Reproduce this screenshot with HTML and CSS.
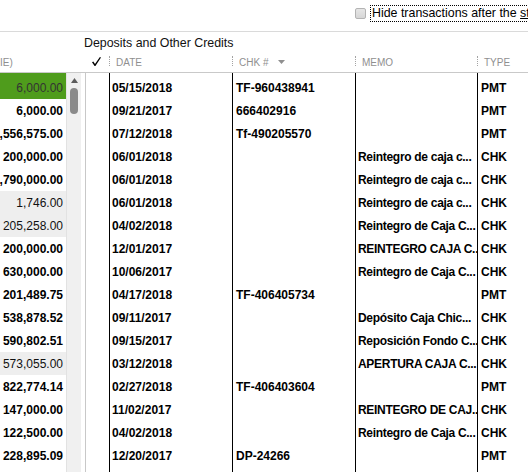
FILE: index.html
```html
<!DOCTYPE html>
<html>
<head>
<meta charset="utf-8">
<link rel="stylesheet" href="styles.css">
</head>
<body>
<div class="page">
  <div class="topbar">
    <span class="cb"></span>
    <span class="cb-label">Hide transactions after the <u>st</u>atement's end date</span>
  </div>
  <div class="head">
    <div class="title-row">Deposits and Other Credits</div>
    <div class="labels">
      <div class="h h-amt">IE)</div>
      <div class="h h-sb"></div>
      <div class="h h-chk"><svg class="check" width="9" height="9" viewBox="0 0 9 9"><polygon points="0,5.2 1.3,4.6 3,6.9 7.9,0 9,0.6 3.4,9 2.6,9" fill="#000"/></svg></div>
      <div class="h h-col w-date"><i class="sep"></i>DATE</div>
      <div class="h h-col w-no"><i class="sep"></i>CHK #<svg class="tri" width="7" height="4" viewBox="0 0 7 4"><polygon points="0,0 7,0 3.5,4" fill="#8f8f8f"/></svg></div>
      <div class="h h-col w-memo"><i class="sep"></i>MEMO</div>
      <div class="h h-col w-type"><i class="sep"></i>TYPE</div>
    </div>
  </div>
  <div class="body">
    <div class="amounts">
      <div class="amt sel"><span>6,000.00</span></div>
      <div class="amt"><span>6,000.00</span></div>
      <div class="amt"><span>1,556,575.00</span></div>
      <div class="amt"><span>200,000.00</span></div>
      <div class="amt"><span>1,790,000.00</span></div>
      <div class="amt alt"><span>1,746.00</span></div>
      <div class="amt alt"><span>205,258.00</span></div>
      <div class="amt"><span>200,000.00</span></div>
      <div class="amt"><span>630,000.00</span></div>
      <div class="amt"><span>201,489.75</span></div>
      <div class="amt"><span>538,878.52</span></div>
      <div class="amt"><span>590,802.51</span></div>
      <div class="amt alt"><span>573,055.00</span></div>
      <div class="amt"><span>822,774.14</span></div>
      <div class="amt"><span>147,000.00</span></div>
      <div class="amt"><span>122,500.00</span></div>
      <div class="amt"><span>228,895.09</span></div>
    </div>
    <div class="scroll">
      <svg class="arrow" width="7" height="5" viewBox="0 0 7 5"><polygon points="3.5,0 7,5 0,5" fill="#5c5c5c"/></svg>
      <span class="thumb"></span>
    </div>
    <div class="grid">
      <div class="col c-chk"></div>
      <div class="col c-date">
        <div class="cell">05/15/2018</div>
        <div class="cell">09/21/2017</div>
        <div class="cell">07/12/2018</div>
        <div class="cell">06/01/2018</div>
        <div class="cell">06/01/2018</div>
        <div class="cell">06/01/2018</div>
        <div class="cell">04/02/2018</div>
        <div class="cell">12/01/2017</div>
        <div class="cell">10/06/2017</div>
        <div class="cell">04/17/2018</div>
        <div class="cell">09/11/2017</div>
        <div class="cell">09/15/2017</div>
        <div class="cell">03/12/2018</div>
        <div class="cell">02/27/2018</div>
        <div class="cell">11/02/2017</div>
        <div class="cell">04/02/2018</div>
        <div class="cell">12/20/2017</div>
      </div>
      <div class="col c-no">
        <div class="cell">TF-960438941</div>
        <div class="cell">666402916</div>
        <div class="cell">Tf-490205570</div>
        <div class="cell"></div>
        <div class="cell"></div>
        <div class="cell"></div>
        <div class="cell"></div>
        <div class="cell"></div>
        <div class="cell"></div>
        <div class="cell">TF-406405734</div>
        <div class="cell"></div>
        <div class="cell"></div>
        <div class="cell"></div>
        <div class="cell">TF-406403604</div>
        <div class="cell"></div>
        <div class="cell"></div>
        <div class="cell">DP-24266</div>
      </div>
      <div class="col c-memo">
        <div class="cell"></div>
        <div class="cell"></div>
        <div class="cell"></div>
        <div class="cell">Reintegro de caja c...</div>
        <div class="cell">Reintegro de caja c...</div>
        <div class="cell">Reintegro de caja c...</div>
        <div class="cell">Reintegro de Caja C...</div>
        <div class="cell">REINTEGRO CAJA C...</div>
        <div class="cell">Reintegro de Caja C...</div>
        <div class="cell"></div>
        <div class="cell">Depósito Caja Chic...</div>
        <div class="cell">Reposición Fondo C...</div>
        <div class="cell">APERTURA CAJA C...</div>
        <div class="cell"></div>
        <div class="cell">REINTEGRO DE CAJ...</div>
        <div class="cell">Reintegro de Caja C...</div>
        <div class="cell"></div>
      </div>
      <div class="col c-type">
        <div class="cell">PMT</div>
        <div class="cell">PMT</div>
        <div class="cell">PMT</div>
        <div class="cell">CHK</div>
        <div class="cell">CHK</div>
        <div class="cell">CHK</div>
        <div class="cell">CHK</div>
        <div class="cell">CHK</div>
        <div class="cell">CHK</div>
        <div class="cell">PMT</div>
        <div class="cell">CHK</div>
        <div class="cell">CHK</div>
        <div class="cell">CHK</div>
        <div class="cell">PMT</div>
        <div class="cell">CHK</div>
        <div class="cell">CHK</div>
        <div class="cell">PMT</div>
      </div>
    </div>
  </div>
</div>
</body>
</html>
```
FILE: styles.css
```css
html, body {
  margin: 0;
  padding: 0;
  background: #fff;
}
body {
  font-family: "Liberation Sans", Arial, sans-serif;
  color: #000;
}
.page {
  width: 528px;
  height: 472px;
  overflow: hidden;
}

/* top bar */
.topbar {
  height: 26px;
  padding: 5px 0 0 355px;
  border-bottom: 1px solid #dadada;
  display: flex;
  align-items: flex-start;
  white-space: nowrap;
  overflow: hidden;
  font-size: 12.4px;
}
.cb {
  flex: none;
  width: 11px;
  height: 11px;
  box-sizing: border-box;
  margin: 3px 4px 0 0;
  border: 1px solid #b3b3b3;
  border-radius: 2px;
  background: linear-gradient(#e6e6e6, #d6d6d6);
}
.cb-label {
  flex: none;
  line-height: 15px;
  padding-left: 1px;
  border: 1px dotted #000;
  border-right: none;
}

/* header */
.title-row {
  height: 18px;
  padding-top: 2px;
  line-height: 18px;
  padding-left: 84px;
  font-size: 12.4px;
  color: #111;
  white-space: nowrap;
}
.labels {
  display: flex;
  height: 20px;
  border-bottom: 1px solid #c9c9c9;
  font-size: 10px;
  color: #8f8f8f;
  white-space: nowrap;
}
.h {
  flex: none;
  display: flex;
  align-items: center;
  overflow: hidden;
}
.h-amt { width: 66px; }
.h-sb { width: 19px; }
.h-chk { width: 24px; }
.check { margin-left: 7px; margin-top: -1px; }
.w-date { width: 123px; }
.w-no { width: 123px; }
.w-memo { width: 122px; }
.w-type { flex: 1; }
.sep {
  flex: none;
  width: 0;
  height: 10px;
  margin-top: -2px;
  margin-right: 6px;
  border-left: 1px dotted #a3a3a3;
}
.tri { margin-left: 10px; margin-top: -1px; }

/* body */
.body {
  display: flex;
  height: 399px;
}
.amounts {
  flex: none;
  width: 66px;
  overflow: hidden;
}
.amt {
  display: flex;
  justify-content: flex-end;
  height: 22px;
  padding-top: 1px;
  line-height: 23px;
  padding-right: 3px;
  font-size: 12px;
  font-weight: bold;
  white-space: nowrap;
  overflow: hidden;
}
.amt span { flex: none; }
.amt.sel {
  padding-top: 4px;
  background: #4f9c1c;
  color: #333;
  font-weight: normal;
}
.amt.alt {
  background: #eeeeee;
  font-weight: normal;
  color: #111;
}
.scroll {
  flex: none;
  width: 15px;
  margin-right: 4px;
  background: #f0f0f0;
  box-shadow: inset 1px 0 #e2e2e2;
  display: flex;
  flex-direction: column;
  align-items: center;
}
.arrow { margin-top: 5px; margin-left: 1px; }
.thumb {
  width: 8px;
  height: 26px;
  margin-top: 5px;
  margin-left: 1px;
  border-radius: 4px;
  background: #8a8a8a;
}
.grid {
  flex: 1;
  display: flex;
  border-left: 1px solid #c8c8c8;
  overflow: hidden;
}
.col {
  flex: none;
  padding-top: 3px;
}
.c-chk { width: 23px; }
.c-date { width: 122px; border-left: 1px solid #000; }
.c-no { width: 122px; border-left: 1px solid #000; }
.c-memo { width: 121px; border-left: 1px solid #000; }
.c-type { flex: 1; border-left: 1px solid #000; }
.cell {
  height: 22px;
  padding-top: 1px;
  line-height: 23px;
  padding-left: 2px;
  font-size: 12px;
  font-weight: bold;
  white-space: nowrap;
  overflow: hidden;
}
.c-no .cell { padding-left: 3px; }
.c-memo .cell { letter-spacing: -0.3px; }
.c-type .cell { padding-left: 3px; }
```
